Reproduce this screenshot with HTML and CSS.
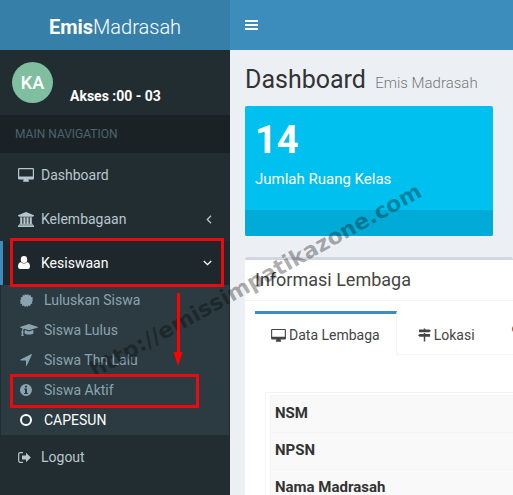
FILE: index.html
```
<!DOCTYPE html>
<html lang="id">
<head>
    <meta charset="UTF-8">
    <meta name="viewport" content="width=device-width, initial-scale=1.0">
    <title>Emis Madrasah | Dashboard</title>
    <link rel="stylesheet" href="styles.css">
</head>
<body>
    <svg class="sprite" aria-hidden="true">
        <symbol id="i-desktop" viewBox="0 0 16 14">
            <path fill-rule="evenodd" d="M1.200 0h13.600Q16 0 16 1.200v9Q16 11.400 14.800 11.400H10.300q0 .8.600 1.400v.6q0 .4-.4.4h-5q-.4 0-.4-.4v-.6q.6-.6.600-1.400H1.200Q0 11.400 0 10.200v-9Q0 0 1.200 0zM1.200 1.200v7.200h13.600V1.200z"/>
        </symbol>
        <symbol id="i-bank" viewBox="0 0 16 15">
            <path d="M8 0l8 3.200v1h-1.100q0 .6-.6.600H1.700q-.6 0-.6-.6H0v-1zM2.200 5.300h2.100v6.400h1.100V5.300h2.100v6.400h1V5.300h2.100v6.400h1.100V5.300h2.100v6.400h.5q.6 0 .6.500v.5H1.100v-.5q0-.5.6-.5h.5zM.600 13.200h14.800q.6 0 .6.500V15H0v-1.300q0-.5.600-.5z"/>
        </symbol>
        <symbol id="i-user" viewBox="0 0 12 14">
            <path d="M6 0a3.200 3.400 0 0 1 3.200 3.400A3.200 3.400 0 0 1 6 6.900a3.200 3.400 0 0 1-3.200-3.500A3.200 3.400 0 0 1 6 0zM3 6.200Q4.300 7.600 6 7.600T9 6.200q3 .2 3 4.600 0 2.200-2.200 2.200H2.200Q0 13 0 10.800 0 6.400 3 6.200z"/>
        </symbol>
        <symbol id="i-certificate" viewBox="0 0 14 14">
            <path d="M7 1.200L8.700 0l.9 1.600 2-.4.3 2.100 2 .500-.6 1.900L14 7l-1.200 1.400.6 1.900-2 .5-.3 2.100-2-.4-.9 1.500L7 12.800 5.300 14l-.9-1.500-2 .4-.3-2.100-2-.5.600-1.900L0 7l1.200-1.300-.6-1.900 2-.5.300-2.100 2 .4L5.300 0z"/>
        </symbol>
        <symbol id="i-graduation" viewBox="0 0 18 12">
            <path d="M9 0l9 2.900v.6L9 6.300 4 4.800q-.9.700-1 2.300.6.300.600.900t-.5.900l.5 3H1.300l.5-3q-.5-.3-.5-.9t.6-1q.1-1.500.8-2.600L0 3.500v-.6zM4.800 6L9 7.400 13.200 6l.3 2.700q-.1 1.700-4.500 1.800-4.400-.1-4.500-1.800z"/>
        </symbol>
        <symbol id="i-arrow" viewBox="0 0 12 12">
            <path d="M12 .4L6.800 11.500q-.3.500-.8.200V6.500H.700Q0 6 .5 5.500L11.500 0q.5 0 .5.400z"/>
        </symbol>
        <symbol id="i-info" viewBox="0 0 12 12">
            <path fill-rule="evenodd" d="M6 0a6 6 0 1 1 0 12A6 6 0 0 1 6 0zM5 1.800v1.600h2V1.800zM4 4.600v1h1v3.300H4v1h4v-1H7V4.600z"/>
        </symbol>
        <symbol id="i-circle" viewBox="0 0 12 12">
            <circle cx="6" cy="6" r="5" fill="none" stroke="currentColor" stroke-width="2"/>
        </symbol>
        <symbol id="i-logout" viewBox="0 0 13 11">
            <path d="M5 .6H2.400Q.7.600.7 2.300v6.400q0 1.700 1.700 1.700H5" fill="none" stroke="currentColor" stroke-width="1.200"/>
            <path d="M8 .700L12.800 5.500 8 10.300V7.600H4V3.400h4z"/>
        </symbol>
        <symbol id="i-left" viewBox="0 0 6 9">
            <path d="M5 .8L1.300 4.500 5 8.200" fill="none" stroke="currentColor" stroke-width="1.300"/>
        </symbol>
        <symbol id="i-down" viewBox="0 0 9 6">
            <path d="M.800 1l3.700 3.700L8.200 1" fill="none" stroke="currentColor" stroke-width="1.300"/>
        </symbol>
        <symbol id="i-signs" viewBox="0 0 14 14">
            <path d="M6.200 0h1.600v1h4.400L14 2.500 12.200 4H1V1h5.200zM6.200 4.800h1.600v1H13v3H7.800V14H6.200V8.800H1.800L0 7.300l1.800-1.500h4.400z"/>
        </symbol>
        <symbol id="i-bars" viewBox="0 0 13 10">
            <path d="M0 0h13v2H0zM0 4h13v2H0zM0 8h13v2H0z"/>
        </symbol>
    </svg>

    <header class="main-header">
        <a href="#" class="logo"><b>Emis</b>Madrasah</a>
        <nav class="navbar">
            <button type="button" class="sidebar-toggle" aria-label="Toggle navigation">
                <svg width="13" height="10"><use href="#i-bars"/></svg>
            </button>
        </nav>
    </header>

    <div class="wrapper">
        <aside class="main-sidebar">
            <div class="user-panel">
                <div class="avatar">KA</div>
                <p class="user-info">Akses :00 - 03</p>
            </div>
            <div class="nav-title">MAIN NAVIGATION</div>
            <ul class="sidebar-menu">
                <li><a href="#"><span class="icon"><svg width="16" height="14"><use href="#i-desktop"/></svg></span>Dashboard</a></li>
                <li><a href="#"><span class="icon"><svg width="16" height="15"><use href="#i-bank"/></svg></span>Kelembagaan
                    <svg class="angle" width="6" height="9"><use href="#i-left"/></svg></a></li>
                <li class="active">
                    <a href="#"><span class="icon"><svg width="12" height="14"><use href="#i-user"/></svg></span>Kesiswaan
                    <svg class="angle" width="9" height="6"><use href="#i-down"/></svg></a>
                    <ul class="treeview-menu">
                        <li><a href="#"><span class="icon"><svg width="13" height="13"><use href="#i-certificate"/></svg></span>Luluskan Siswa</a></li>
                        <li><a href="#"><span class="icon"><svg width="18" height="12"><use href="#i-graduation"/></svg></span>Siswa Lulus</a></li>
                        <li><a href="#"><span class="icon"><svg width="12" height="12"><use href="#i-arrow"/></svg></span>Siswa Thn Lalu</a></li>
                        <li><a href="#"><span class="icon"><svg width="12" height="12"><use href="#i-info"/></svg></span>Siswa Aktif</a></li>
                        <li class="current"><a href="#"><span class="icon"><svg width="12" height="12"><use href="#i-circle"/></svg></span>CAPESUN</a></li>
                    </ul>
                </li>
                <li><a href="#"><span class="icon"><svg width="13" height="11"><use href="#i-logout"/></svg></span>Logout</a></li>
            </ul>
        </aside>

        <main class="content">
            <h1>Dashboard <small>Emis Madrasah</small></h1>

            <div class="small-box">
                <div class="inner">
                    <h3>14</h3>
                    <p>Jumlah Ruang Kelas</p>
                </div>
                <div class="small-box-footer"></div>
            </div>

            <section class="box">
                <h2 class="box-title">Informasi Lembaga</h2>
                <div class="box-body">
                    <ul class="tabs">
                        <li class="active"><a href="#"><svg width="15" height="13"><use href="#i-desktop"/></svg>Data Lembaga</a></li>
                        <li><a href="#"><svg width="13" height="14"><use href="#i-signs"/></svg>Lokasi</a></li>
                        <li><a href="#" aria-label="Status"><svg class="dot" width="10" height="14"><circle cx="5" cy="4" r="5"/></svg></a></li>
                    </ul>
                    <div class="tab-content">
                        <table>
                            <tr><th scope="row">NSM</th><td></td></tr>
                            <tr><th scope="row">NPSN</th><td></td></tr>
                            <tr><th scope="row">Nama Madrasah</th><td></td></tr>
                        </table>
                    </div>
                </div>
            </section>
        </main>
    </div>

    <!-- tutorial marks and site watermark on top of the page -->
    <svg class="marks" width="513" height="495">
        <text class="watermark" transform="translate(95 378) rotate(-29)">http://emissimpatikazone.com</text>
        <rect x="11.500" y="239.500" width="211" height="46"/>
        <rect x="11.500" y="375.500" width="186" height="31"/>
        <path class="line" d="M178.500 293v62"/>
        <path class="head" d="M173.500 352h9l-4.500 14z"/>
    </svg>
</body>
</html>
```
FILE: styles.css
```
* {
    box-sizing: border-box;
}
body {
    font-family: Roboto, sans-serif;
    font-size: 14px;
    line-height: 20px;
    background-color: #222d32;
    margin: 0;
    color: #333;
    height: 100vh;
    display: flex;
    flex-direction: column;
    overflow: hidden;
}
a {
    color: inherit;
    text-decoration: none;
}
ul {
    list-style: none;
    margin: 0;
    padding: 0;
}
svg {
    fill: currentColor;
    flex: none;
}
.sprite {
    display: none;
}

/* header */
.main-header {
    display: flex;
    height: 50px;
    flex: none;
    color: #fff;
}
.logo {
    width: 230px;
    background: #367fa9;
    font-size: 20px;
    font-weight: 300;
    line-height: 54px;
    text-align: center;
}
.logo b {
    font-weight: 700;
}
.navbar {
    flex: 1;
    background: #3c8dbc;
}
.sidebar-toggle {
    display: flex;
    align-items: center;
    height: 50px;
    padding: 0 15px;
    border: 0;
    background: none;
    color: #fff;
    cursor: pointer;
}
.wrapper {
    display: flex;
    flex: 1;
    min-height: 0;
}

/* sidebar */
.main-sidebar {
    width: 230px;
    flex: none;
    background: #222d32;
    color: #b8c7ce;
}
.user-panel {
    display: flex;
    height: 65px;
    padding: 12px;
    gap: 17px;
}
.avatar {
    width: 41px;
    height: 41px;
    flex: none;
    border-radius: 50%;
    background: #7fbf9f;
    color: #fff;
    font-size: 18px;
    font-weight: 500;
    line-height: 41px;
    text-align: center;
}
.user-info {
    margin: 24px 0 0;
    color: #fff;
    font-weight: 700;
}
.nav-title {
    padding: 9px 15px;
    background: #1a2226;
    color: #4b646f;
    font-size: 12px;
}
.sidebar-menu a {
    display: flex;
    align-items: center;
    height: 44px;
    padding: 0 18px 0 15px;
    border-left: 3px solid transparent;
}
.icon {
    display: flex;
    width: 23px;
}
.angle {
    margin-left: auto;
}
.sidebar-menu > .active > a {
    background: #1e282c;
    border-left-color: #3c8dbc;
    color: #fff;
}
.treeview-menu {
    margin: 0 1px;
    background: #2c3b41;
    color: #8aa4af;
}
.treeview-menu a {
    height: 30px;
    padding-left: 16px;
}
.treeview-menu .icon {
    width: 24px;
}
.treeview-menu .current {
    color: #fff;
}

/* content */
.content {
    flex: 1;
    min-width: 0;
    padding: 15px 20px 0 15px;
    background: #ecf0f5;
    overflow: hidden;
}
h1 {
    margin: 0 0 11px;
    font-size: 25px;
    font-weight: 400;
    line-height: 30px;
}
h1 small {
    margin-left: 3px;
    color: #777;
    font-size: 15px;
    font-weight: 300;
    line-height: 1;
}
.small-box {
    border-radius: 2px;
    background: #00c0ef;
    color: #fff;
    overflow: hidden;
}
.inner {
    height: 104px;
    padding: 10px;
}
.inner h3 {
    margin: 0;
    font-size: 38px;
    font-weight: 700;
    line-height: 48px;
}
.inner p {
    margin: 5px 0 0;
    font-size: 15px;
}
.small-box-footer {
    height: 26px;
    background: #00acd7;
}
.box {
    margin: 21px -20px 0 0;
    border-top: 3px solid #d2d6de;
    border-radius: 3px;
    background: #fff;
}
.box-title {
    margin: 0;
    padding: 10px;
    border-bottom: 1px solid #f4f4f4;
    color: #444;
    font-size: 18px;
    font-weight: 400;
    line-height: 20px;
}
.box-body {
    padding: 10px 0 10px 10px;
}
.tabs {
    display: flex;
    border-bottom: 1px solid #f4f4f4;
    color: #444;
    white-space: nowrap;
}
.tabs li {
    margin: 0 5px -1px 0;
    border-top: 3px solid transparent;
}
.tabs .active {
    border-top-color: #3c8dbc;
    border-right: 1px solid #f4f4f4;
    background: #fff;
}
.tabs a {
    display: flex;
    align-items: center;
    gap: 3px;
    padding: 11px 16px 10px;
}
.dot {
    color: #c0501f;
}
.tab-content {
    margin: 37px 0 0 10px;
    padding: 2px 0 0 4px;
    border: 1px solid #f4f4f4;
    border-right: 0;
}
table {
    width: 100%;
    border-collapse: collapse;
    background: #f9f9f9;
}
th,
td {
    height: 37px;
    padding: 0 4px 2px;
    border: 1px solid #f4f4f4;
    border-right: 0;
    text-align: left;
}
th {
    font-size: 15px;
}
td {
    border-left: 0;
}

/* marks */
.marks {
    position: absolute;
    top: 0;
    left: 0;
    pointer-events: none;
}
.marks rect {
    fill: none;
    stroke: #e80c10;
    stroke-width: 3px;
}
.marks .line {
    stroke: #f00;
    stroke-width: 3px;
}
.marks .head {
    fill: #f00;
}
.watermark {
    font-family: "DejaVu Sans", sans-serif;
    font-size: 22px;
    font-weight: 700;
    fill: #000;
    fill-opacity: 0.32;
}
```
